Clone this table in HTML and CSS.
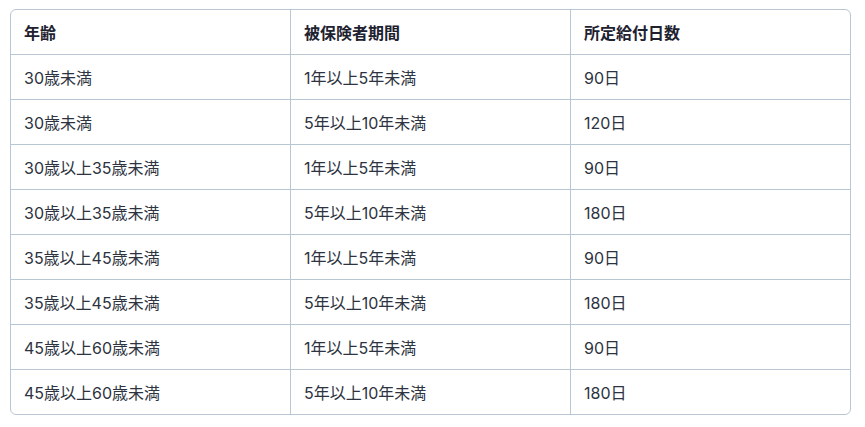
FILE: index.html
```html
<!DOCTYPE html>
<html lang="ja">
<head>
<meta charset="utf-8">
<link rel="stylesheet" href="styles.css">
</head>
<body>
<div class="wrap">
<table class="tbl">
<colgroup><col class="c1"><col class="c2"><col class="c3"></colgroup>
<thead>
<tr><th>年齢</th><th>被保険者期間</th><th>所定給付日数</th></tr>
</thead>
<tbody>
<tr><td>30歳未満</td><td>1年以上5年未満</td><td>90日</td></tr>
<tr><td>30歳未満</td><td>5年以上10年未満</td><td>120日</td></tr>
<tr><td>30歳以上35歳未満</td><td>1年以上5年未満</td><td>90日</td></tr>
<tr><td>30歳以上35歳未満</td><td>5年以上10年未満</td><td>180日</td></tr>
<tr><td>35歳以上45歳未満</td><td>1年以上5年未満</td><td>90日</td></tr>
<tr><td>35歳以上45歳未満</td><td>5年以上10年未満</td><td>180日</td></tr>
<tr><td>45歳以上60歳未満</td><td>1年以上5年未満</td><td>90日</td></tr>
<tr><td>45歳以上60歳未満</td><td>5年以上10年未満</td><td>180日</td></tr>
</tbody>
</table>
</div>
</body>
</html>
```
FILE: styles.css
```css
html, body {
  margin: 0;
  padding: 0;
  background: #ffffff;
}
body {
  padding: 9px 14px 0 10px;
  font-family: Inter, "Noto Sans CJK JP", sans-serif;
  font-size: 16px;
}
.wrap {
  width: 839px;
  border: 1px solid #b8c7d3;
  border-radius: 6px;
  overflow: hidden;
}
.tbl {
  width: 839px;
  border-collapse: separate;
  border-spacing: 0;
  table-layout: fixed;
}
.c1 { width: 279px; }
.c2 { width: 280px; }
.c3 { width: 280px; }
.tbl th,
.tbl td {
  height: 44px;
  padding: 0 13px;
  text-align: left;
  vertical-align: middle;
  border-bottom: 1px solid #b8c7d3;
  border-left: 1px solid #b8c7d3;
  box-sizing: content-box;
}
.tbl th:first-child,
.tbl td:first-child {
  border-left: none;
}
.tbl tbody tr:last-child td {
  border-bottom: none;
}
.tbl th {
  font-weight: 700;
  color: #1e2230;
}
.tbl td {
  font-weight: 400;
  color: #2d3340;
}
```
